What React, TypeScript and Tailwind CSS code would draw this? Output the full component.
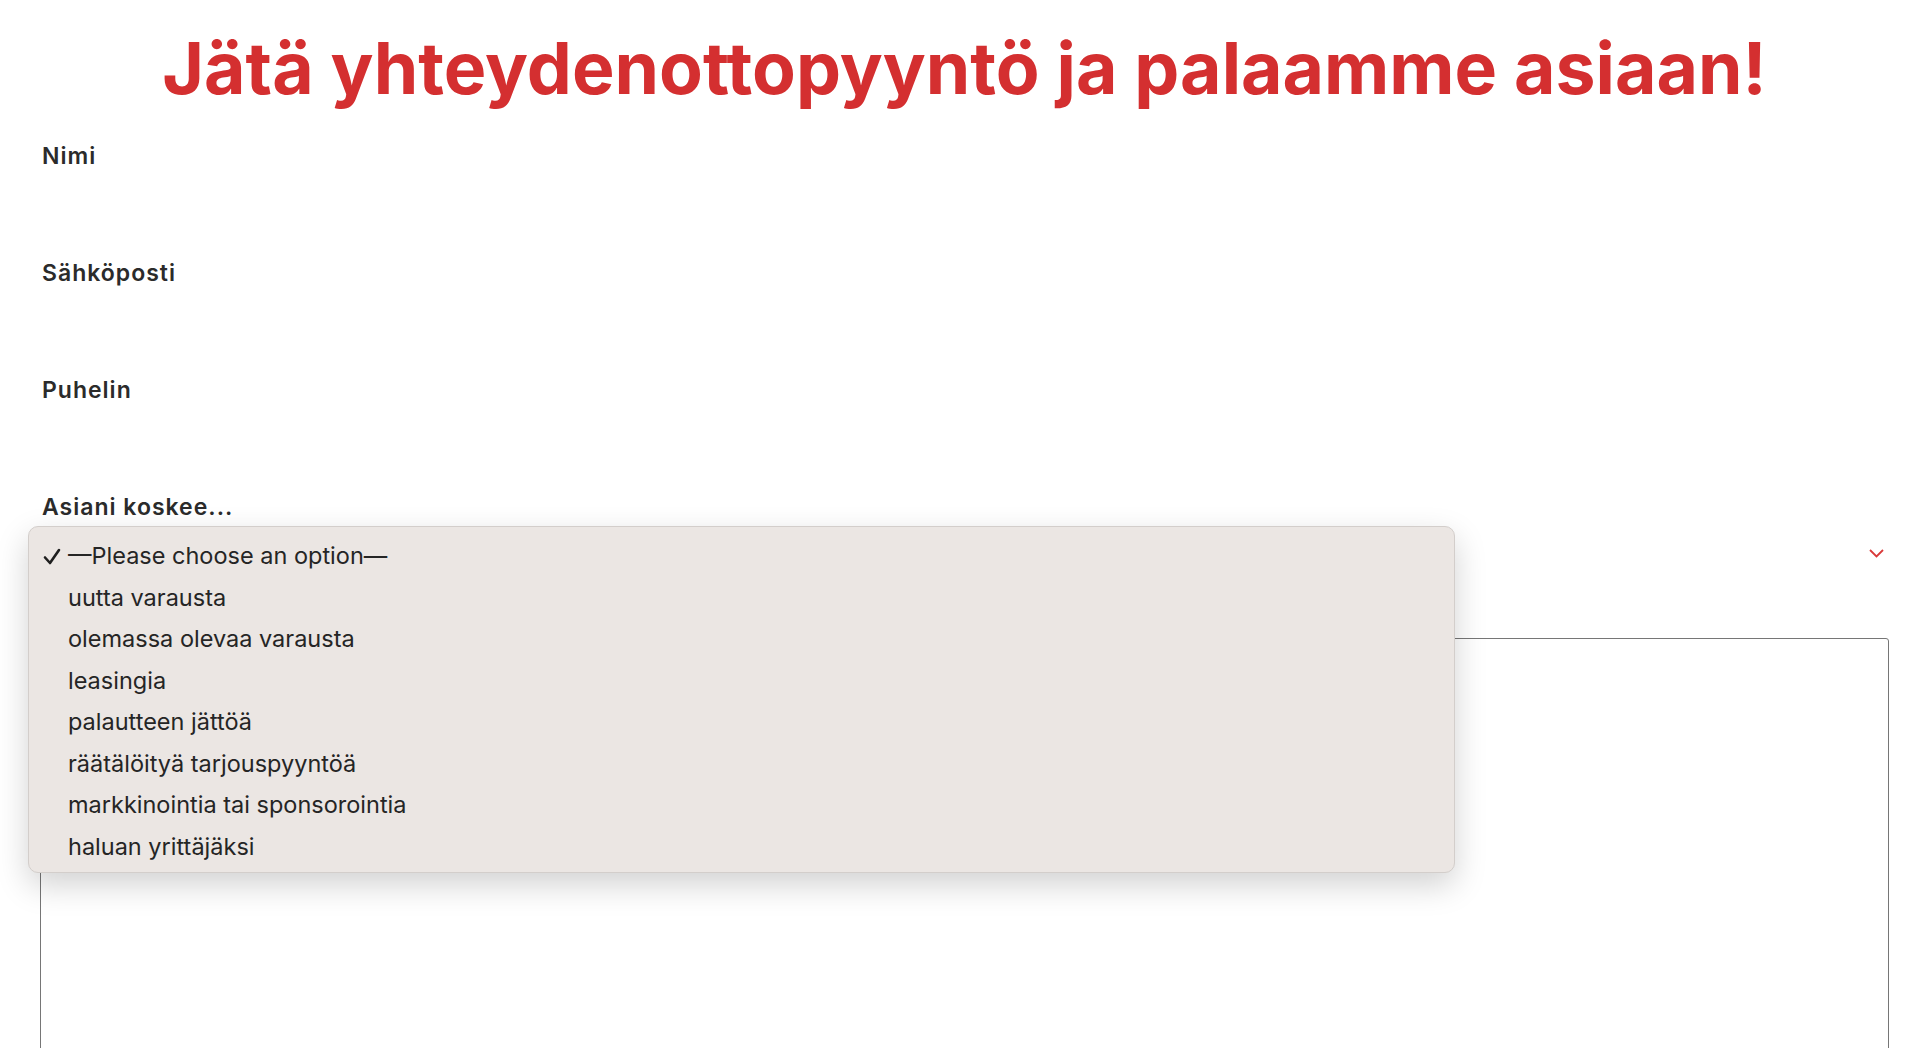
import React from "react";

const options = [
  "—Please choose an option—",
  "uutta varausta",
  "olemassa olevaa varausta",
  "leasingia",
  "palautteen jättöä",
  "räätälöityä tarjouspyyntöä",
  "markkinointia tai sponsorointia",
  "haluan yrittäjäksi",
];

const fields = ["Nimi", "Sähköposti", "Puhelin"];

const Label: React.FC<{ text: string }> = ({ text }) => (
  <label className="block text-[23px] leading-none font-semibold tracking-[1px] text-[#2b2b2b] font-['Inter',sans-serif]">
    {text}
  </label>
);

export default function App() {
  return (
    <div className="relative h-[1048px] w-full overflow-hidden bg-white pl-[40px] pr-[31px] font-['Inter',sans-serif]">
      <h1 className="pt-[33px] text-center text-[71.5px] leading-none font-bold text-[#d42f30]">
        Jätä yhteydenottopyyntö ja palaamme asiaan!
      </h1>

      <form className="mt-[40px] pl-[2px]">
        {fields.map((f) => (
          <div key={f} className="h-[117px]">
            <Label text={f} />
          </div>
        ))}

        <div>
          <Label text="Asiani koskee..." />
          <div className="mt-[10px] flex h-[50px] items-center justify-end pr-[5px]">
            <svg width="15" height="9" viewBox="0 0 15 9" fill="none">
              <path d="M1 1l6.5 6.5L14 1" stroke="#d93a3a" strokeWidth="1.8" />
            </svg>
          </div>
          <div className="ml-[-2px] mt-[59px] h-[500px] rounded-[3px] border border-[#767676]" />
        </div>
      </form>

      <div className="absolute left-[28px] top-[526px] w-[1427px] rounded-[10px] border border-[#d3cecb] bg-[#ebe6e3] pt-[8px] pb-[5px] shadow-[0_12px_32px_rgba(0,0,0,0.18)]">
        <ul>
          {options.map((o, i) => (
            <li
              key={o}
              className="relative flex h-[41.5px] items-center pl-[39px] text-[23.5px] leading-[41.5px] text-[#252525]"
            >
              {i === 0 && (
                <svg
                  className="absolute left-[14px] top-[13px]"
                  width="18"
                  height="17"
                  viewBox="0 0 18 17"
                  fill="none"
                >
                  <path d="M2 9.5l5 5.5L16 2" stroke="#1f1f1f" strokeWidth="2.6" strokeLinecap="round" strokeLinejoin="round" />
                </svg>
              )}
              {o}
            </li>
          ))}
        </ul>
      </div>
    </div>
  );
}
